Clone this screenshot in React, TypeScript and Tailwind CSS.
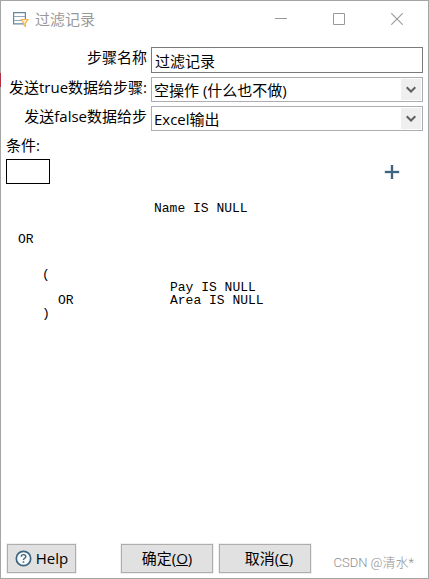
import React, { useState } from 'react';

interface SelectRowProps {
  id: string;
  label: string;
  value: string;
  options: string[];
  onChange: (value: string) => void;
}

const labelClass = 'w-[146px] shrink-0 text-right leading-5 whitespace-nowrap';

const SelectRow: React.FC<SelectRowProps> = ({ id, label, value, options, onChange }) => {
  return (
    <div className="flex items-start gap-1">
      <label htmlFor={id} className={labelClass}>{label}</label>
      <div className="relative flex-1">
        <select
          id={id}
          value={value}
          onChange={(e) => onChange(e.target.value)}
          className="block h-[25px] w-full appearance-none border border-[#abadb3] bg-white pl-0.5 pr-6 leading-5 focus:outline-none"
        >
          {options.map((option) => (
            <option key={option} value={option}>{option}</option>
          ))}
        </select>
        <span className="pointer-events-none absolute inset-y-0.5 right-0.5 flex w-5 items-center justify-center bg-[#efefef]">
          <svg width="10" height="8" viewBox="0 0 10 8" fill="none" stroke="#606060" strokeWidth="2">
            <path d="M0.7 1.2L5 5.5L9.3 1.2" />
          </svg>
        </span>
      </div>
    </div>
  );
};

const TitleBar: React.FC = () => {
  return (
    <header className="flex h-9 items-center justify-between pl-3 pr-0.5 text-[#999999]">
      <div className="flex items-center gap-1.5">
        <svg width="16" height="16" viewBox="0 0 16 16" fill="none">
          <path d="M0.6 1.6H12.4V12.9H0.6Z" fill="#fff" stroke="#66879c" strokeWidth="1.2" />
          <path d="M1 5.5H12M1 9.5H9" stroke="#8fa9b9" strokeWidth="1.2" />
          <path d="M8.3 8.5H14.9L12.4 12.3V15.4L10.8 14V12.3Z" fill="#fff0d2" stroke="#f8b64c" strokeWidth="1.2" />
        </svg>
        <h1>过滤记录</h1>
      </div>
      <div className="flex items-center">
        <button type="button" aria-label="最小化" className="flex h-8 w-[58px] items-center justify-center">
          <svg width="12" height="12" viewBox="0 0 12 12" stroke="#999">
            <path d="M0 5.5H12" />
          </svg>
        </button>
        <button type="button" aria-label="最大化" className="flex h-8 w-[58px] items-center justify-center">
          <svg width="12" height="12" viewBox="0 0 12 12" fill="none" stroke="#999">
            <path d="M0.5 0.5H11.5V11.5H0.5Z" />
          </svg>
        </button>
        <button type="button" aria-label="关闭" className="flex h-8 w-[58px] items-center justify-center">
          <svg width="12" height="12" viewBox="0 0 12 12" stroke="#999" strokeWidth="1.1">
            <path d="M0.3 0.3L11.7 11.7M11.7 0.3L0.3 11.7" />
          </svg>
        </button>
      </div>
    </header>
  );
};

const buttonClass = 'h-[29px] border border-[#adadad] bg-[#e1e1e1] outline outline-[#efefef]';

const App: React.FC = () => {
  const [name, setName] = useState('过滤记录');
  const [trueStep, setTrueStep] = useState('空操作 (什么也不做)');
  const [falseStep, setFalseStep] = useState('Excel输出');
  const steps = ['空操作 (什么也不做)', 'Excel输出'];

  return (
    <div className="relative flex min-h-screen flex-col border border-[#a5a5a5] bg-white font-['Open_Sans','Noto_Sans_CJK_SC',sans-serif] text-[15px] text-black">
      <span className="absolute -left-px top-[72px] h-3.5 w-px bg-[#b03048]" />
      <TitleBar />

      <main className="flex flex-1 flex-col pr-[5px] pt-2.5">
        <div className="flex flex-col gap-1">
          <div className="flex items-start gap-1">
            <label htmlFor="step-name" className={labelClass}>步骤名称</label>
            <input
              id="step-name"
              type="text"
              value={name}
              onChange={(e) => setName(e.target.value)}
              className="h-[26px] min-w-0 flex-1 border border-[#7a7a7a] px-[3px] leading-5 focus:outline-none"
            />
          </div>
          <SelectRow id="true-step" label="发送true数据给步骤:" value={trueStep} options={steps} onChange={setTrueStep} />
          <SelectRow id="false-step" label="发送false数据给步" value={falseStep} options={steps} onChange={setFalseStep} />
        </div>

        {/* Condition editor */}
        <section className="pl-[5px] pt-1">
          <h2 className="leading-5">条件:</h2>
          <div className="flex items-center justify-between pr-[21px] pt-1">
            <button type="button" aria-label="取反" className="h-[25px] w-11 border border-black bg-white" />
            <button type="button" aria-label="添加条件" className="flex h-[25px] w-5 items-center justify-center">
              <svg width="16" height="16" viewBox="0 0 16 16" fill="none">
                <path d="M0.5 8H15.5M8 1V15" stroke="#bdcdd8" strokeWidth="3.2" />
                <path d="M1 8H15M8 1V15" stroke="#3d6480" strokeWidth="2" />
              </svg>
            </button>
          </div>
          <div className="pl-3 pt-[18px] font-['Liberation_Mono',monospace] text-[13px] leading-[13px]">
            <p className="pl-[136px]">Name IS NULL</p>
            <p className="pt-[18px]">OR</p>
            <div className="pl-6 pt-[22px]">
              <p>(</p>
              <p className="pl-32">Pay IS NULL</p>
              <div className="flex pl-4">
                <span className="w-28">OR</span>
                <span>Area IS NULL</span>
              </div>
              <p>)</p>
            </div>
          </div>
        </section>
      </main>

      <footer className="flex items-center pb-[5px] pl-1.5 pr-3.5">
        <button type="button" className={`${buttonClass} flex w-[69px] items-center justify-center gap-1`}>
          <svg width="17" height="17" viewBox="0 0 17 17" fill="none" stroke="#3d6480">
            <circle cx="8.5" cy="8.5" r="7.2" fill="#f7fafc" strokeWidth="1.7" />
            <path d="M6.3 6.7C6.3 4 10.8 4 10.8 6.6C10.8 8.3 8.5 8.2 8.5 10" strokeWidth="1.4" />
            <path d="M8.5 11.2V12.7" strokeWidth="1.5" />
          </svg>
          Help
        </button>
        <button type="button" className={`${buttonClass} ml-[45px] w-[92px]`}>
          确定(<span className="underline">O</span>)
        </button>
        <button type="button" className={`${buttonClass} ml-1.5 w-[92px] pl-2`}>
          取消(<span className="underline">C</span>)
        </button>
        <span className="ml-auto pt-2 font-['Roboto','Noto_Sans_CJK_SC',sans-serif] text-[13px] font-light text-[#8f8f8f]">
          CSDN @清水*
        </span>
      </footer>
    </div>
  );
};

export default App;
